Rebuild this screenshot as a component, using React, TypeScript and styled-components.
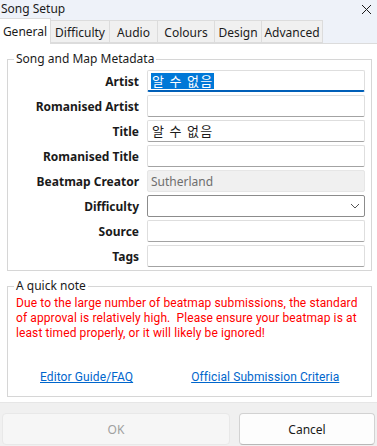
import React from 'react';
import styled, { createGlobalStyle } from 'styled-components';

const GlobalStyle = createGlobalStyle`
  html, body {
    margin: 0;
    padding: 0;
    background: #fff;
  }
  body {
    font-family: 'Noto Sans', 'Noto Sans CJK KR', sans-serif;
    font-size: 12px;
    color: #1b1b1b;
  }
  * {
    box-sizing: border-box;
  }
`;

const Window = styled.div`
  width: 377px;
  height: 446px;
  display: flex;
  flex-direction: column;
  background: #fff;
  overflow: hidden;
`;

const TitleBar = styled.div`
  height: 18px;
  flex: none;
  display: flex;
  align-items: center;
  justify-content: space-between;
  padding: 0 5px 0 1px;
  background: #eef2f9;
  line-height: 16px;
`;

const TabStrip = styled.div`
  height: 26px;
  flex: none;
  display: flex;
  align-items: flex-end;
  background: #eef2f9;
  border-bottom: 1px solid #dcdcdc;
`;

const Tab = styled.div<{ $w: number; $active?: boolean }>`
  width: ${(p) => p.$w}px;
  height: ${(p) => (p.$active ? 26 : 23)}px;
  margin-bottom: ${(p) => (p.$active ? -1 : 0)}px;
  margin-left: ${(p) => (p.$active ? 0 : -1)}px;
  display: flex;
  align-items: ${(p) => (p.$active ? 'flex-start' : 'center')};
  justify-content: center;
  padding-top: ${(p) => (p.$active ? 4 : 2)}px;
  background: ${(p) => (p.$active ? '#fff' : '#f0f0f0')};
  border: 1px solid #dcdcdc;
  border-bottom: ${(p) => (p.$active ? 'none' : '1px solid #dcdcdc')};
  border-left: ${(p) => (p.$active ? 'none' : '1px solid #dcdcdc')};
  white-space: nowrap;
`;

const Body = styled.div`
  flex: none;
  padding: 7px 5px 0 7px;
`;

const Group = styled.fieldset<{ $gap?: number }>`
  margin: ${(p) => p.$gap || 0}px 0 0 0;
  padding: 0 5px 3px 0;
  border: 1px solid #d6d6d6;
  min-width: 0;
`;

const Legend = styled.legend`
  margin-left: 6px;
  padding: 0 2px;
  line-height: 16px;
  color: #1b1b1b;
`;

const Form = styled.div`
  display: grid;
  grid-template-columns: 131px 218px;
  column-gap: 8px;
  row-gap: 3px;
  padding-top: 3px;
  align-items: center;
`;

const Label = styled.div`
  text-align: right;
  font-weight: 700;
  white-space: nowrap;
  color: #1a1a1a;
`;

const Field = styled.div<{ $focused?: boolean; $disabled?: boolean }>`
  height: 22px;
  display: flex;
  align-items: center;
  padding: 0 3px;
  background: ${(p) => (p.$disabled ? '#f0f0f0' : '#fff')};
  border: 1px solid ${(p) => (p.$disabled ? '#e6e6e6' : '#dedede')};
  border-bottom: ${(p) =>
    p.$focused ? '2px solid #005fb8' : p.$disabled ? '1px solid #e6e6e6' : '1px solid #a3a3a3'};
  border-radius: 2px;
  color: ${(p) => (p.$disabled ? '#6e6e6e' : '#1a1a1a')};
  white-space: nowrap;
`;

const Hangul = styled.span<{ $selected?: boolean }>`
  font-family: 'Noto Sans CJK KR', sans-serif;
  font-size: 13px;
  line-height: 16px;
  letter-spacing: 1.3px;
  padding: 0 1px;
  background: ${(p) => (p.$selected ? '#0078d7' : 'transparent')};
  color: ${(p) => (p.$selected ? '#fff' : '#1a1a1a')};
`;

const Combo = styled.div`
  height: 22px;
  display: flex;
  align-items: center;
  justify-content: flex-end;
  padding-right: 4px;
  background: #fff;
  border: 1px solid #8c8c8c;
  border-radius: 2px;
`;

const Note = styled.div`
  padding: 2px 8px 0 8px;
  font-family: Roboto, 'Noto Sans', sans-serif;
  letter-spacing: 0.1px;
  line-height: 15px;
  color: #ff0000;
`;

const Links = styled.div`
  display: flex;
  gap: 58px;
  padding: 28px 0 8px 32px;
  font-family: Roboto, 'Noto Sans', sans-serif;
  letter-spacing: 0.1px;
  line-height: 16px;
`;

const Link = styled.a`
  color: #0066cc;
  text-decoration: underline;
  cursor: pointer;
`;

const Footer = styled.div`
  margin-top: auto;
  height: 44px;
  flex: none;
  display: flex;
  gap: 9px;
  padding: 10px 2px 0 2px;
  background: #f0f0f0;
  border-top: 1px solid #e6e6e6;
`;

const Button = styled.button<{ $w: number; $disabled?: boolean }>`
  width: ${(p) => p.$w}px;
  height: 32px;
  border-radius: 4px;
  border: 1px solid ${(p) => (p.$disabled ? '#e8e8e8' : '#d2d2d2')};
  border-bottom-color: ${(p) => (p.$disabled ? '#e8e8e8' : '#b8b8b8')};
  background: ${(p) => (p.$disabled ? '#f6f6f6' : '#fdfdfd')};
  color: ${(p) => (p.$disabled ? '#a0a0a0' : '#1a1a1a')};
  font: inherit;
  font-size: 12px;
  padding: 0;
`;

const tabs = [
  { name: 'General', w: 51 },
  { name: 'Difficulty', w: 60 },
  { name: 'Audio', w: 49 },
  { name: 'Colours', w: 58 },
  { name: 'Design', w: 48 },
  { name: 'Advanced', w: 62 },
];

const CloseIcon = () => (
  <svg width="11" height="11" viewBox="0 0 11 11">
    <path d="M1 1 L10 10 M10 1 L1 10" stroke="#1a1a1a" strokeWidth="1" fill="none" />
  </svg>
);

const Chevron = () => (
  <svg width="10" height="6" viewBox="0 0 10 6">
    <polyline points="1,1 5,5 9,1" stroke="#555" strokeWidth="1" fill="none" />
  </svg>
);

export default function App() {
  return (
    <Window>
      <GlobalStyle />
      <TitleBar>
        <span>Song Setup</span>
        <CloseIcon />
      </TitleBar>
      <TabStrip>
        {tabs.map((t, i) => (
          <Tab key={t.name} $w={t.w} $active={i === 0}>
            {t.name}
          </Tab>
        ))}
      </TabStrip>
      <Body>
        <Group>
          <Legend>Song and Map Metadata</Legend>
          <Form>
            <Label>Artist</Label>
            <Field $focused>
              <Hangul $selected>알 수 없음</Hangul>
            </Field>
            <Label>Romanised Artist</Label>
            <Field />
            <Label>Title</Label>
            <Field>
              <Hangul>알 수 없음</Hangul>
            </Field>
            <Label>Romanised Title</Label>
            <Field />
            <Label>Beatmap Creator</Label>
            <Field $disabled>Sutherland</Field>
            <Label>Difficulty</Label>
            <Combo>
              <Chevron />
            </Combo>
            <Label>Source</Label>
            <Field />
            <Label>Tags</Label>
            <Field />
          </Form>
        </Group>
        <Group $gap={7}>
          <Legend>A quick note</Legend>
          <Note>
            Due to the large number of beatmap submissions, the standard of approval is relatively
            high.&nbsp; Please ensure your beatmap is at least timed properly, or it will likely be
            ignored!
          </Note>
          <Links>
            <Link>Editor Guide/FAQ</Link>
            <Link>Official Submission Criteria</Link>
          </Links>
        </Group>
      </Body>
      <Footer>
        <Button $w={228} $disabled disabled>
          OK
        </Button>
        <Button $w={136}>Cancel</Button>
      </Footer>
    </Window>
  );
}
